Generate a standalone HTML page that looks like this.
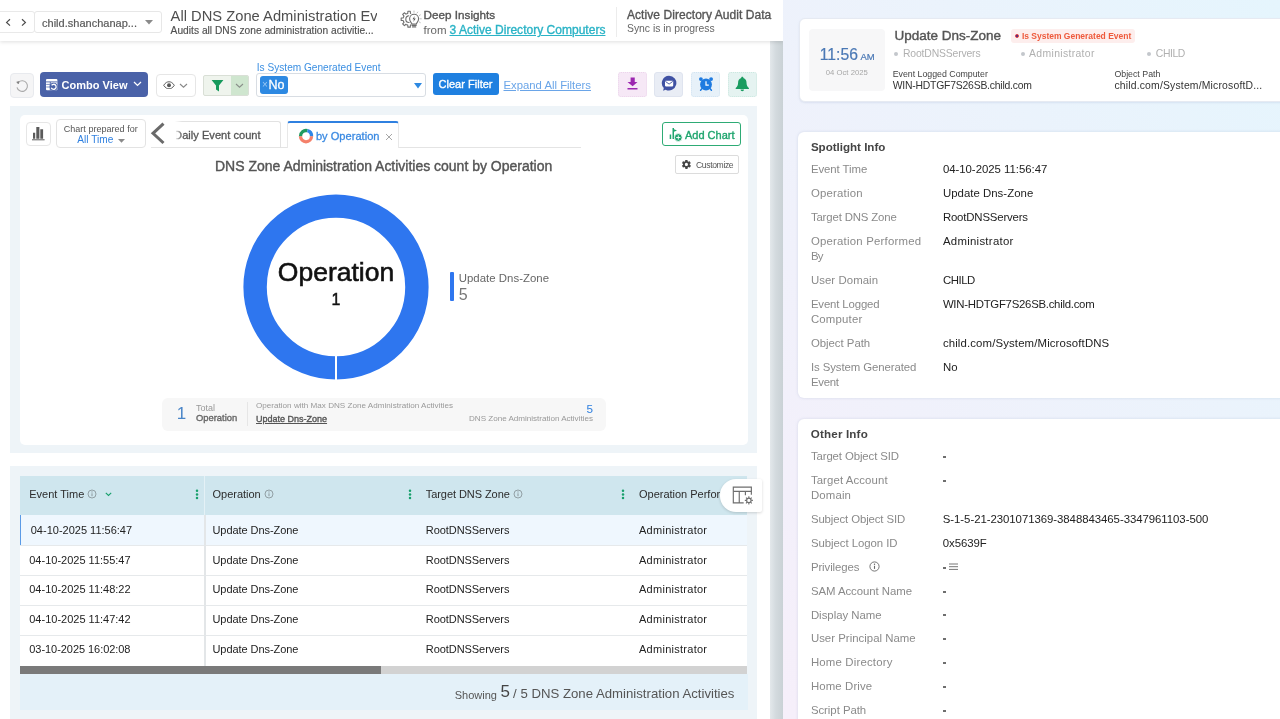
<!DOCTYPE html>
<html>
<head>
<meta charset="utf-8">
<title>All DNS Zone Administration Events</title>
<style>
*{box-sizing:border-box;margin:0;padding:0}
html,body{width:1280px;height:719px;overflow:hidden;background:#fff}
body{position:relative;font-family:"Liberation Sans",sans-serif;color:#333;font-size:12px}
.abs{position:absolute}
.t{position:absolute;white-space:nowrap;line-height:16px;height:16px}
.sb{font-weight:bold}
/* left side */
#left{position:absolute;left:0;top:0;width:783px;height:719px;background:#fff;overflow:hidden}
#strip{position:absolute;left:770px;top:0;width:13px;height:719px;background:linear-gradient(90deg,#e3e8eb 0%,#d3dade 45%,#c9d1d5 100%)}
#header{position:absolute;left:0;top:0;width:783px;height:41px;background:#fff;box-shadow:0 1px 4px rgba(0,0,0,.13)}
.box{position:absolute;background:#fff;border:1px solid #e3e3e3;border-radius:3px}
.cont{position:absolute;left:10px;width:747px;background:#eef4f8}
.card{position:absolute;background:#fff;border-radius:5px}
/* right side */
#right{position:absolute;left:783px;top:0;width:497px;height:719px;background:linear-gradient(to top right,#f6effa,#e5f5fd);overflow:hidden}
.rcard{position:absolute;left:15px;width:500px;background:#fff;border-radius:6px;box-shadow:0 0 3px rgba(120,140,180,.25)}
.lbl{color:#8a8a8a}
.val{color:#222}
#left,#right{will-change:transform}
</style>
</head>
<body>
<div id="left">
  <div id="strip"></div>

  <!-- toolbar -->
  <div id="toolbar">
    <div class="box" style="left:9.600px;top:73.300px;width:24.300px;height:24.400px;background:#f5f5f6;border-color:#e8eaee;border-radius:4px"></div>
    <svg class="abs" style="left:15px;top:78.500px" width="14" height="14" viewBox="0 0 14 14" fill="none"><path d="M3.400 3.300 A5.300 5.300 0 1 1 2 8.300" stroke="#aaa" stroke-width="1.100"/><path d="M1.700 2.900 L4.100 2.600 L3.300 5z" fill="#777" stroke="#777" stroke-width=".500" stroke-linejoin="round"/></svg>
    <div class="abs" style="left:40.100px;top:71.600px;width:108px;height:25.200px;background:#4a62a8;border-radius:4px"></div>
    <svg class="abs" style="left:46px;top:78.900px" width="12" height="12" viewBox="0 0 12 12"><rect x="0" y="0" width="11.400" height="11.300" rx="1" fill="#fff"/><path d="M0 2.900h11.400M4.300 2.900v8.400" stroke="#4a62a8" stroke-width=".900" fill="none"/><path d="M.200 5.400h3.800M.200 8h3.800" stroke="#7d90c4" stroke-width="1" fill="none"/><circle cx="7.600" cy="7.700" r="4" fill="#4a62a8"/><path d="M5.600 6.300A2.500 2.500 0 1 1 5.300 8.700" stroke="#fff" stroke-width="1.300" fill="none"/></svg>
    <span class="t" style="letter-spacing:0.02px;;;left:61.5px;top:77px;font-size:11px;color:#fff;font-weight:bold">Combo View</span>
    <svg class="abs" style="left:133px;top:81px" width="9" height="6" viewBox="0 0 9 6"><path d="M1 1l3.5 3.4L8 1" fill="none" stroke="#fff" stroke-width="1.3"/></svg>
    <div class="box" style="left:155.5px;top:73.5px;width:40px;height:23px;border-color:#e6e6e6;border-radius:4px"></div>
    <svg class="abs" style="left:163px;top:80.800px" width="12" height="8.600" viewBox="0 0 14 10"><path d="M0.8 5C3 1.6 5 .9 7 .9s4 .7 6.200 4.100C11 8.400 9 9.100 7 9.100S3 8.400.8 5z" fill="none" stroke="#555" stroke-width="1.1"/><circle cx="7" cy="5" r="2.300" fill="#555"/></svg>
    <svg class="abs" style="left:179px;top:83px" width="9" height="6" viewBox="0 0 9 6"><path d="M1 1l3.5 3.2L8 1" fill="none" stroke="#888" stroke-width="1.1"/></svg>
    <div class="abs" style="left:203px;top:75.200px;width:45.600px;height:21px;border:1px solid #d9dfd6;border-radius:2px;background:#eff4ed;overflow:hidden"><div class="abs" style="left:27px;top:0;width:18px;height:20px;background:#cfe6cf"></div></div>
    <svg class="abs" style="left:211px;top:79px" width="13" height="14" viewBox="0 0 13 14"><path d="M0.6 1h11.800L8 6.400v6.200L5 10.400v-4z" fill="#169a5c"/></svg>
    <svg class="abs" style="left:235px;top:83px" width="9" height="6" viewBox="0 0 9 6"><path d="M1 1l3.5 3.200L8 1" fill="none" stroke="#8a8f8a" stroke-width="1.1"/></svg>
    <span class="t" style="letter-spacing:0.01px;;;left:256.800px;top:60px;font-size:10.1px;color:#3b8fe2">Is System Generated Event</span>
    <div class="box" style="left:256.200px;top:73.200px;width:170.300px;height:23.500px;border-color:#d8dde3;border-radius:3px"></div>
    <div class="abs" style="left:259.500px;top:76px;width:28px;height:17.500px;background:#2d89e2;border-radius:3px"></div>
    <span class="t" style="left:262px;top:77px;font-size:10px;color:#9cc9f4">&#215;</span>
    <span class="t" style="letter-spacing:0.01px;;;left:268.500px;top:77px;font-size:12.5px;color:#fff;-webkit-text-stroke:.3px #fff">No</span>
    <svg class="abs" style="left:414px;top:83px" width="8" height="6" viewBox="0 0 8 6"><path d="M0 0h8L4 5.600z" fill="#2d89e2"/></svg>
    <div class="abs" style="left:432.500px;top:73.200px;width:66.200px;height:22px;background:#1f80e0;border-radius:3px"></div>
    <span class="t" style="letter-spacing:0.02px;;;left:438.500px;top:76.300px;font-size:11px;color:#fff;-webkit-text-stroke:.35px #fff">Clear Filter</span>
    <span class="t" style="letter-spacing:0.01px;;;left:503.500px;top:77px;font-size:11.3px;color:#6aa5e8;text-decoration:underline">Expand All Filters</span>
    <div class="abs" style="left:618px;top:72px;width:28.500px;height:24.700px;background:#f6e8f6;border:1px dotted #ecd5ec;border-radius:3px"></div>
    <svg class="abs" style="left:626px;top:76px" width="13" height="15" viewBox="0 0 13 15"><path d="M4.600 1.500h4.150v4.400h2.750L6.600 10.300 1.500 5.900h3.100z" fill="#9c27b0"/><rect x="1.500" y="12" width="10" height="1.500" fill="#9c27b0"/></svg>
    <div class="abs" style="left:654.400px;top:72px;width:29px;height:24.700px;background:#e9edf5;border:1px solid #dfe4ef;border-radius:3px"></div>
    <svg class="abs" style="left:660px;top:74px" width="18" height="18" viewBox="0 0 18 18"><path d="M9 1.700a7.400 7.400 0 1 1-3.400 14 l-2.500 1.100 .700-2.700A7.400 7.400 0 0 1 9 1.700z" fill="#3f51a3"/><rect x="5" y="6.800" width="8.200" height="5.600" rx=".800" fill="#fff"/><path d="M5.400 7.400l3.700 2.700 3.700-2.700" fill="none" stroke="#3f51a3" stroke-width=".900"/></svg>
    <div class="abs" style="left:691px;top:72px;width:29.200px;height:24.700px;background:#e7f1f9;border:1px dotted #d2e4f2;border-radius:3px"></div>
    <svg class="abs" style="left:697.600px;top:75.500px" width="16" height="16" viewBox="0 0 16 16"><circle cx="8" cy="8.500" r="5.900" fill="#1f7be0"/><circle cx="2.900" cy="3.100" r="1.900" fill="#1f7be0"/><circle cx="13.100" cy="3.100" r="1.900" fill="#1f7be0"/><path d="M3.900 12.600l-1.300 1.700M12.100 12.600l1.300 1.700" stroke="#1f7be0" stroke-width="1.500" stroke-linecap="round"/><path d="M8 5.200v4h2.800" fill="none" stroke="#fff" stroke-width="1.200"/></svg>
    <div class="abs" style="left:727.500px;top:72px;width:29px;height:24.700px;background:#e5f3f1;border:1px dotted #cbe8e0;border-radius:3px"></div>
    <svg class="abs" style="left:735px;top:76px" width="15" height="16" viewBox="0 0 15 16"><path d="M7.300.800c.700 0 1.100.500 1.100 1.100 2 .700 3.100 2.400 3.100 4.700 0 2.800.800 4.300 2.400 5.500v.800H.700v-.800c1.600-1.200 2.400-2.700 2.400-5.500 0-2.300 1.100-4 3.100-4.700 0-.600.400-1.100 1.100-1.100z" fill="#1a9c60"/><path d="M5.600 13.600h3.400c0 1-.700 1.700-1.700 1.700s-1.700-.700-1.700-1.700z" fill="#1a9c60"/></svg>
  </div>

  <!-- chart container -->
  <div class="cont" id="chartCont" style="top:106px;height:347px">
    <div class="card" style="left:10px;top:9px;width:727.500px;height:329.500px"></div>
  </div>
  <div id="chart">
    <div class="box" style="left:26px;top:122px;width:25px;height:23.500px;border-color:#e6e6e6;border-radius:4px"></div>
    <svg class="abs" style="left:31px;top:126px" width="15" height="15" viewBox="0 0 15 15"><path d="M2 6.800h2.200v5.900H2zM5.300 1h3.100v11.700H5.300zM9.300 3.300h2.800v9.400H9.300z" fill="#5a5a5a"/><path d="M1 13.800h12.600" stroke="#5a5a5a" stroke-width="1"/></svg>
    <div class="box" style="left:55.500px;top:119px;width:90.500px;height:29px;border-color:#e3e3e3;border-radius:4px"></div>
    <span class="t" style="letter-spacing:0.03px;;left:63.700px;top:120.600px;font-size:9px;color:#555">Chart prepared for</span>
    <span class="t" style="letter-spacing:0.01px;;left:77.300px;top:131.800px;font-size:10.1px;color:#2f80e0">All Time</span>
    <svg class="abs" style="left:117.500px;top:138.500px" width="7" height="4" viewBox="0 0 7 4"><path d="M0 0h7L3.500 3.800z" fill="#8a8a8a"/></svg>
    <svg class="abs" style="left:149px;top:121px" width="18" height="25" viewBox="0 0 18 25"><path d="M14.500 2.600 L4 12.300 L14.500 22" fill="none" stroke="#6a6a6a" stroke-width="3"/></svg>
    <div class="abs" style="left:151px;top:147px;width:430px;height:1px;background:#e4e4e4"></div>
    <div class="abs" style="left:168px;top:121px;width:112.500px;height:26.500px;border:1px solid #e2e2e2;border-bottom:none;border-left:none;border-radius:0 3px 0 0"></div>
    <div class="abs" style="left:176px;top:126px;width:90px;height:18px;overflow:hidden"><span class="t" style="letter-spacing:0.01px;;left:-1.900px;top:0.900px;font-size:11.1px;color:#555;-webkit-text-stroke:.3px #555">Daily Event count</span></div>
    <div class="abs" style="left:166px;top:119px;width:16px;height:28px;background:linear-gradient(90deg,#fff 55%,rgba(255,255,255,0))"></div>
    <div class="abs" style="left:287.400px;top:121px;width:112.100px;height:27px;background:#fff;border:1px solid #e8e8e8;border-top:2px solid #2f80e0;border-bottom:none;border-radius:3px 3px 0 0"></div>
    <svg class="abs" style="left:297.600px;top:128px" width="16" height="16" viewBox="0 0 16 16" fill="none" stroke-width="3.300"><path d="M2.500 8.300 A5.500 5.500 0 0 1 9.400 2.700" stroke="#1f9a60"/><path d="M9.400 2.700 A5.500 5.500 0 0 1 13.500 8.300" stroke="#2f86e6"/><path d="M13.500 8.300 A5.500 5.500 0 0 1 2.500 8.300" stroke="#f4806a"/></svg>
    <span class="t" style="letter-spacing:0.01px;;left:315.900px;top:127.900px;font-size:11.1px;color:#3b8ae2;-webkit-text-stroke:.3px #3b8ae2">by Operation</span>
    <svg class="abs" style="left:384.600px;top:133px" width="8" height="8" viewBox="0 0 8 8"><path d="M1 1l6 6M7 1l-6 6" stroke="#a8a8a8" stroke-width="1"/></svg>
    <div class="abs" style="left:662px;top:122px;width:79px;height:23.700px;border:1.500px solid #2eab75;border-radius:3px;background:#fff"></div>
    <svg class="abs" style="left:668px;top:126px" width="16" height="16" viewBox="0 0 16 16"><path d="M1.700 8.600h1.500v4.400H1.700zM4.500 2h1.500v11H4.500z" fill="#1fa56e"/><path d="M6 3.300l3 1.200-3 1.300z" fill="#1fa56e"/><circle cx="10.300" cy="11.500" r="3.900" fill="#1fa56e" stroke="#fff" stroke-width=".800"/><path d="M10.300 9.400v4.200M8.200 11.500h4.200" stroke="#fff" stroke-width=".900"/></svg>
    <span class="t" style="letter-spacing:-0.01px;;left:685px;top:127.200px;font-size:11px;color:#1fa56e;-webkit-text-stroke:.35px #1fa56e">Add Chart</span>
    <div class="box" style="left:674.700px;top:155px;width:64px;height:18.500px;border-color:#dcdcdc;border-radius:2px"></div>
    <svg class="abs" style="left:681.200px;top:159px" width="10.800" height="10.800" viewBox="0 0 24 24"><path fill="#444" d="M19.400 13c0-.3.100-.600.100-1s0-.700-.100-1l2.100-1.600c.200-.150.250-.400.100-.650l-2-3.450c-.100-.200-.400-.300-.600-.200l-2.500 1c-.500-.400-1.100-.700-1.700-1l-.400-2.650A.500.500 0 0 0 14 2h-4c-.250 0-.450.200-.500.400l-.400 2.650c-.600.250-1.150.600-1.700 1l-2.450-1c-.250-.100-.500 0-.600.200l-2 3.450c-.100.200-.100.500.100.650L4.600 11c0 .300-.100.650-.100 1s0 .700.100 1l-2.100 1.650c-.200.150-.250.400-.100.650l2 3.450c.100.200.400.300.600.200l2.500-1c.500.400 1.100.700 1.700 1l.400 2.650c0 .200.200.400.500.400h4c.250 0 .450-.200.500-.400l.400-2.650c.600-.250 1.150-.600 1.700-1l2.500 1c.200.100.500 0 .600-.200l2-3.450c.100-.200.100-.500-.100-.650zM12 15.500a3.500 3.500 0 1 1 0-7 3.500 3.500 0 0 1 0 7z"/></svg>
    <span class="t" style="letter-spacing:-0.37px;left:696px;top:156.600px;font-size:8.6px;color:#555">Customize</span>
    <span class="t" style="letter-spacing:-0.01px;;left:215px;top:157.700px;font-size:14px;color:#555;-webkit-text-stroke:.4px #555">DNS Zone Administration Activities count by Operation</span>
    <svg class="abs" style="left:236px;top:187px" width="200" height="200" viewBox="0 0 200 200"><circle cx="100" cy="100" r="80.900" fill="none" stroke="#2e76ef" stroke-width="23.400"/><rect x="99" y="166" width="2" height="30" fill="#fff"/></svg>
    <span class="t" style="letter-spacing:0.01px;;left:277.800px;top:257px;height:30px;line-height:30px;font-size:26.5px;color:#111;-webkit-text-stroke:.6px #111">Operation</span>
    <span class="t" style="letter-spacing:0.09px;;left:331.500px;top:290.200px;height:20px;line-height:20px;font-size:16px;color:#111;-webkit-text-stroke:.45px #111">1</span>
    <div class="abs" style="left:450.400px;top:272.300px;width:3.600px;height:29px;background:#2e76ef;border-radius:1px"></div>
    <span class="t" style="letter-spacing:0.03px;;left:458.700px;top:270.400px;font-size:11.4px;color:#666">Update Dns-Zone</span>
    <span class="t" style="letter-spacing:0.09px;;left:458.700px;top:285px;height:20px;line-height:20px;font-size:16px;color:#777">5</span>
    <div class="abs" style="left:162.300px;top:397.600px;width:443.300px;height:33.200px;background:#f7f7f7;border-radius:6px"></div>
    <span class="t" style="letter-spacing:0.03px;;left:176.800px;top:404px;height:20px;line-height:20px;font-size:17px;color:#4a86c8">1</span>
    <span class="t" style="left:195.900px;top:400px;font-size:9px;color:#999">Total</span>
    <span class="t" style="letter-spacing:0.03px;;left:195.900px;top:410.300px;font-size:9.4px;color:#666;-webkit-text-stroke:.35px #666">Operation</span>
    <div class="abs" style="left:247px;top:402px;width:1px;height:24px;background:#e6e6e6"></div>
    <span class="t" style="letter-spacing:0.01px;;left:256px;top:398.200px;font-size:8.1px;color:#999">Operation with Max DNS Zone Administration Activities</span>
    <span class="t" style="left:256px;top:411px;font-size:9px;color:#555;-webkit-text-stroke:.35px #555;text-decoration:underline">Update Dns-Zone</span>
    <span class="t" style="letter-spacing:-0.02px;;left:586.500px;top:400.500px;font-size:11.7px;color:#2f80e0">5</span>
    <span class="t" style="letter-spacing:-0.02px;;left:469px;top:411px;font-size:8.1px;color:#999">DNS Zone Administration Activities</span>
  </div>

  <!-- table container -->
  <div class="cont" id="tableCont" style="top:466px;height:253px"></div>
  <div id="grid">
  <div class="abs" style="left:20px;top:476.200px;width:727px;height:38.800px;background:#cfe6ee"></div>
  <div class="abs" style="left:20px;top:515px;width:727px;height:150.600px;background:#fff"></div>
  <div class="abs" style="left:20px;top:515px;width:727px;height:30.200px;background:#eff7fe;border-left:1.600px solid #5a9ae6"></div>
  <span class="t" style="left:30.75px;top:521.6px;font-size:11px;color:#222">04-10-2025 11:56:47</span>
  <span class="t" style="letter-spacing:-0.07px;;left:212.500px;top:521.6px;font-size:11px;color:#222">Update Dns-Zone</span>
  <span class="t" style="letter-spacing:-0.06px;;left:425.800px;top:521.6px;font-size:11px;color:#222">RootDNSServers</span>
  <span class="t" style="letter-spacing:0.27px;;left:639px;top:521.6px;font-size:11px;color:#222">Administrator</span>
  <div class="abs" style="left:20px;top:544.8px;width:727px;height:1px;background:#e6e9eb"></div>
  <span class="t" style="left:29.25px;top:551.6px;font-size:11px;color:#222">04-10-2025 11:55:47</span>
  <span class="t" style="letter-spacing:-0.07px;;left:212.500px;top:551.6px;font-size:11px;color:#222">Update Dns-Zone</span>
  <span class="t" style="letter-spacing:-0.06px;;left:425.800px;top:551.6px;font-size:11px;color:#222">RootDNSServers</span>
  <span class="t" style="letter-spacing:0.27px;;left:639px;top:551.6px;font-size:11px;color:#222">Administrator</span>
  <div class="abs" style="left:20px;top:574.9px;width:727px;height:1px;background:#e6e9eb"></div>
  <span class="t" style="left:29.25px;top:581.3px;font-size:11px;color:#222">04-10-2025 11:48:22</span>
  <span class="t" style="letter-spacing:-0.07px;;left:212.500px;top:581.3px;font-size:11px;color:#222">Update Dns-Zone</span>
  <span class="t" style="letter-spacing:-0.06px;;left:425.800px;top:581.3px;font-size:11px;color:#222">RootDNSServers</span>
  <span class="t" style="letter-spacing:0.27px;;left:639px;top:581.3px;font-size:11px;color:#222">Administrator</span>
  <div class="abs" style="left:20px;top:604.7px;width:727px;height:1px;background:#e6e9eb"></div>
  <span class="t" style="left:29.25px;top:611.1px;font-size:11px;color:#222">04-10-2025 11:47:42</span>
  <span class="t" style="letter-spacing:-0.07px;;left:212.500px;top:611.1px;font-size:11px;color:#222">Update Dns-Zone</span>
  <span class="t" style="letter-spacing:-0.06px;;left:425.800px;top:611.1px;font-size:11px;color:#222">RootDNSServers</span>
  <span class="t" style="letter-spacing:0.27px;;left:639px;top:611.1px;font-size:11px;color:#222">Administrator</span>
  <div class="abs" style="left:20px;top:634.9px;width:727px;height:1px;background:#e6e9eb"></div>
  <span class="t" style="letter-spacing:-0.05px;;left:29.25px;top:640.9px;font-size:11px;color:#222">03-10-2025 16:02:08</span>
  <span class="t" style="letter-spacing:-0.07px;;left:212.500px;top:640.9px;font-size:11px;color:#222">Update Dns-Zone</span>
  <span class="t" style="letter-spacing:-0.06px;;left:425.800px;top:640.9px;font-size:11px;color:#222">RootDNSServers</span>
  <span class="t" style="letter-spacing:0.27px;;left:639px;top:640.9px;font-size:11px;color:#222">Administrator</span>
  <div class="abs" style="left:204px;top:476.200px;width:1px;height:38.800px;background:#e4f1f6"></div>
  <div class="abs" style="left:204px;top:515px;width:1.500px;height:150.600px;background:#e3e6e8"></div>
  <span class="t" style="left:29.250px;top:485.900px;font-size:11px;color:#2c2c2c">Event Time</span>
  <svg class="abs" style="left:87px;top:489.3px" width="10" height="10" viewBox="0 0 10 10"><circle cx="5" cy="5" r="4" fill="none" stroke="#8b979c" stroke-width=".9"/><path d="M5 4.300v2.900" stroke="#8b979c" stroke-width="1"/><circle cx="5" cy="2.900" r=".600" fill="#8b979c"/></svg>
  <svg class="abs" style="left:105px;top:492px" width="7" height="5" viewBox="0 0 7 5"><path d="M.800.800l2.700 2.700L6.200.800" fill="none" stroke="#18a06c" stroke-width="1.100"/></svg>
  <svg class="abs" style="left:194.5px;top:489px" width="4" height="11" viewBox="0 0 4 11"><circle cx="2" cy="1.700" r="1.250" fill="#18a06c"/><circle cx="2" cy="5.400" r="1.250" fill="#18a06c"/><circle cx="2" cy="9.100" r="1.250" fill="#18a06c"/></svg>
  <span class="t" style="letter-spacing:-0.01px;;left:212.500px;top:485.900px;font-size:11px;color:#2c2c2c">Operation</span>
  <svg class="abs" style="left:263.75px;top:489.3px" width="10" height="10" viewBox="0 0 10 10"><circle cx="5" cy="5" r="4" fill="none" stroke="#8b979c" stroke-width=".9"/><path d="M5 4.300v2.900" stroke="#8b979c" stroke-width="1"/><circle cx="5" cy="2.900" r=".600" fill="#8b979c"/></svg>
  <svg class="abs" style="left:407.8px;top:489px" width="4" height="11" viewBox="0 0 4 11"><circle cx="2" cy="1.700" r="1.250" fill="#18a06c"/><circle cx="2" cy="5.400" r="1.250" fill="#18a06c"/><circle cx="2" cy="9.100" r="1.250" fill="#18a06c"/></svg>
  <span class="t" style="letter-spacing:-0.07px;;left:425.800px;top:485.900px;font-size:11px;color:#2c2c2c">Target DNS Zone</span>
  <svg class="abs" style="left:512.9px;top:489.3px" width="10" height="10" viewBox="0 0 10 10"><circle cx="5" cy="5" r="4" fill="none" stroke="#8b979c" stroke-width=".9"/><path d="M5 4.300v2.900" stroke="#8b979c" stroke-width="1"/><circle cx="5" cy="2.900" r=".600" fill="#8b979c"/></svg>
  <svg class="abs" style="left:621px;top:489px" width="4" height="11" viewBox="0 0 4 11"><circle cx="2" cy="1.700" r="1.250" fill="#18a06c"/><circle cx="2" cy="5.400" r="1.250" fill="#18a06c"/><circle cx="2" cy="9.100" r="1.250" fill="#18a06c"/></svg>
  <div class="abs" style="left:639px;top:484px;width:82px;height:20px;overflow:hidden"><span class="t" style="letter-spacing:-0.01px;;left:0;top:2.250px;font-size:11px;color:#2c2c2c">Operation Performed By</span></div>
  <div class="abs" style="left:719.900px;top:479px;width:42.600px;height:32.600px;background:#fff;border-radius:16px 2px 2px 16px;box-shadow:0 1px 3px rgba(0,0,0,.16)"></div>
  <svg class="abs" style="left:732px;top:485.500px" width="22.400" height="19.200" viewBox="0 0 23 20" fill="none" stroke="#6d6d6d" stroke-width="1.200"><path d="M12 17.600H1.200V1.200h18.800V9"/><path d="M1.200 5.600h18.800M7.400 5.600v12M13.800 5.600v4"/><circle cx="17.400" cy="15" r="2.300"/><path d="M17.400 10.800v1.600M17.400 17.600v1.600M13.200 15h1.600M20 15h1.600M14.400 12l1.150 1.150M19.250 16.850L20.400 18M20.400 12l-1.150 1.150M15.550 16.850L14.400 18" stroke-width="1.100"/></svg>
  <div class="abs" style="left:20px;top:665.600px;width:727px;height:8.200px;background:#d2d2d2"></div>
  <div class="abs" style="left:20px;top:665.600px;width:361px;height:8.200px;background:#7a7a7a"></div>
  <div class="abs" style="left:20px;top:673.800px;width:727.500px;height:36.500px;background:#e4f1f9"></div>
  <span class="t" style="left:454.700px;top:686.500px;font-size:11px;color:#555">Showing</span>
  <span class="t" style="letter-spacing:-0.07px;;left:500.600px;top:682px;height:20px;line-height:20px;font-size:17px;color:#444">5</span>
  <span class="t" style="left:513.100px;top:686.200px;font-size:13.2px;color:#555">/ 5 DNS Zone Administration Activities</span>
  </div>

  <!-- header -->
  <div id="header">
    <div class="box" style="left:-5px;top:11px;width:40px;height:22px;border-radius:3px;border-color:#e9e9e9"></div>
    <svg class="abs" style="left:4px;top:17px" width="26" height="11" viewBox="0 0 26 11"><path d="M6 2.2 L2.6 5.4 L6 8.6 M18 2.2 L21.4 5.4 L18 8.6" fill="none" stroke="#4a4a4a" stroke-width="1.200"/></svg>
    <div class="box" style="left:34px;top:11px;width:128px;height:22px;border-color:#e7e7e7"></div>
    <span class="t" style="letter-spacing:0.01px;;;left:42px;top:15px;font-size:11px;color:#5a5a5a;-webkit-text-stroke:.200px #5a5a5a">child.shanchanap...</span>
    <svg class="abs" style="left:145px;top:20px" width="8" height="5" viewBox="0 0 8 5"><path d="M0 0h8L4 4.6z" fill="#8a8a8a"/></svg>
    <div class="abs" style="left:170px;top:6px;width:206.5px;height:20px;overflow:hidden"><span class="t" style="letter-spacing:0.02px;left:0.600px;top:2.300px;font-size:14.7px;color:#4e4e4e">All DNS Zone Administration Events</span></div>
    <span class="t" style="letter-spacing:0.02px;;;left:170.6px;top:23.400px;font-size:10.2px;color:#505050;-webkit-text-stroke:.150px #505050">Audits all DNS zone administration activitie...</span>
    <svg class="abs" style="left:399px;top:9px" width="24" height="20" viewBox="0 0 24 20" fill="none" stroke="#6e6e6e" stroke-width="1.100" stroke-linecap="round" stroke-linejoin="round">
      <path d="M15.90 11.75 L15.95 11.55 L18.01 11.38 L18.01 9.02 L15.95 8.85 L15.90 8.65 L15.30 7.20 L15.19 7.02 L16.53 5.44 L14.86 3.77 L13.28 5.11 L13.10 5.00 L11.65 4.40 L11.45 4.35 L11.28 2.29 L8.92 2.29 L8.75 4.35 L8.55 4.40 L7.10 5.00 L6.92 5.11 L5.34 3.77 L3.67 5.44 L5.01 7.02 L4.90 7.20 L4.30 8.65 L4.25 8.85 L2.19 9.02 L2.19 11.38 L4.25 11.55 L4.30 11.75 L4.90 13.20 L5.01 13.38 L3.67 14.96 L5.34 16.63 L6.92 15.29 L7.10 15.40 L8.55 16.00 L8.75 16.05 L8.92 18.11 L11.28 18.11 L11.45 16.05 L11.65 16.00 L13.10 15.40 L13.28 15.29 L14.86 16.63 L16.53 14.96 L15.19 13.38 L15.30 13.20Z"/>
      <circle cx="10.1" cy="10.2" r="3.300"/>
      <rect x="12.300" y="0" width="12" height="20" fill="#fff" stroke="none"/>
      <circle cx="15.100" cy="9.800" r="6" fill="#fff" stroke="none"/>
      <path d="M12.900 15.100 C12.800 13.900 10.600 12.600 10.600 9.800 A4.500 4.500 0 0 1 19.600 9.800 C19.600 12.600 17.400 13.900 17.300 15.100 Z"/>
      <path d="M13 16.500h4.200 M13.500 17.900h3.200" stroke-width="1.200"/>
      <path d="M15.700 6.900 L13.500 10.300 H15 L14.300 12.900 L16.700 9.400 H15.100 Z" fill="#555" stroke="none"/>
      <path d="M15 3.300v-1.300 M18 4.100l.700-1 M20.300 6.500l1-.600 M21 9.800h1.300 M20.300 13l1 .600" stroke="#b5b5b5" stroke-width=".900"/>
    </svg>
    <span class="t" style="letter-spacing:0.01px;;;left:423.6px;top:7px;font-size:11.7px;color:#555;-webkit-text-stroke:.35px #555">Deep Insights</span>
    <span class="t" style="left:423.6px;top:22px;font-size:11.5px;color:#666">from</span>
    <span class="t" style="letter-spacing:0.02px;;;left:449.5px;top:22px;font-size:12px;color:#2ab3c6;-webkit-text-stroke:.35px #2ab3c6;text-decoration:underline">3 Active Directory Computers</span>
    <div class="abs" style="left:616px;top:7px;width:1px;height:30px;background:#ececec"></div>
    <span class="t" style="letter-spacing:0.06px;;;left:627px;top:7px;font-size:12px;color:#555;-webkit-text-stroke:.35px #555">Active Directory Audit Data</span>
    <span class="t" style="letter-spacing:-0.01px;;;left:627px;top:21px;font-size:10.4px;color:#666">Sync is in progress</span>
  </div>
</div>

<div id="right">
  <div class="abs" style="left:16.200px;top:18px;width:520px;height:84px;background:#fff;border:1px solid #e6eaf2;box-shadow:0 1px 2px rgba(130,150,190,.18);border-radius:6px"></div>
  <div class="abs" style="left:25.7px;top:29px;width:76.500px;height:61.800px;background:#f7f7f8;border-radius:4px"></div>
  <span class="t" style="left:36.800px;top:44.600px;font-size:15.7px;color:#4a78b5;-webkit-text-stroke:.2px #4a78b5;height:20px;line-height:20px">11:56</span>
  <span class="t" style="letter-spacing:0.03px;;left:77.400px;top:48.900px;font-size:9.5px;color:#4a78b5;-webkit-text-stroke:.2px #4a78b5">AM</span>
  <span class="t" style="letter-spacing:0.03px;;left:42.700px;top:64.800px;font-size:7.7px;color:#a8a8a8">04 Oct 2025</span>
  <span class="t" style="letter-spacing:-0.01px;;left:111.6px;top:27.1px;font-size:13.5px;color:#555;-webkit-text-stroke:.4px #555;height:18px;line-height:18px">Update Dns-Zone</span>
  <div class="abs" style="left:227.5px;top:29.200px;width:124.500px;height:14.300px;background:#fdeeed;border-radius:3px"></div>
  <div class="abs" style="left:231.9px;top:34.3px;width:3.800px;height:3.800px;border-radius:50%;background:#3a2a8a;border:1.100px solid #ee3d3d"></div>
  <span class="t" style="letter-spacing:-0.01px;;left:238.9px;top:28.4px;font-size:8.5px;color:#ee5a3c;font-weight:bold">Is System Generated Event</span>
  <div class="abs" style="left:110.8px;top:51.600px;width:4px;height:4px;border-radius:50%;background:#c3c7cc"></div>
  <span class="t" style="letter-spacing:-0.16px;;left:120px;top:45.6px;font-size:10.4px;color:#b0b0b0">RootDNSServers</span>
  <div class="abs" style="left:237.5px;top:51.600px;width:4px;height:4px;border-radius:50%;background:#c3c7cc"></div>
  <span class="t" style="letter-spacing:0.34px;;left:246.1px;top:45.6px;font-size:10.4px;color:#b0b0b0">Administrator</span>
  <div class="abs" style="left:364px;top:51.600px;width:4px;height:4px;border-radius:50%;background:#c3c7cc"></div>
  <span class="t" style="letter-spacing:-0.42px;;left:372.8px;top:45.6px;font-size:10.4px;color:#b0b0b0">CHILD</span>
  <span class="t" style="letter-spacing:-0.01px;;left:109.7px;top:66px;font-size:8.8px;color:#444">Event Logged Computer</span>
  <span class="t" style="letter-spacing:-0.21px;;left:109.700px;top:78.400px;font-size:10.4px;color:#333">WIN-HDTGF7S26SB.child.com</span>
  <span class="t" style="left:331.4px;top:65.8px;font-size:8.8px;color:#444">Object Path</span>
  <span class="t" style="letter-spacing:0.18px;;left:331.400px;top:78.400px;font-size:10.4px;color:#333">child.com/System/MicrosoftD...</span>
  <div class="rcard" style="left:14.8px;top:132.200px;height:265.400px"></div>
  <span class="t" style="letter-spacing:-0.02px;;left:27.9px;top:138.8px;font-size:11.6px;color:#444;font-weight:bold">Spotlight Info</span>
  <span class="t" style="letter-spacing:-0.07px;;left:27.9px;top:161.1px;font-size:11.4px;color:#8a8a8a">Event Time</span>
  <span class="t" style="letter-spacing:-0.03px;;left:159.9px;top:161.1px;font-size:11.4px;color:#222">04-10-2025 11:56:47</span>
  <span class="t" style="letter-spacing:0.2px;;left:27.9px;top:185.3px;font-size:11.4px;color:#8a8a8a">Operation</span>
  <span class="t" style="letter-spacing:0.03px;;left:159.9px;top:185.3px;font-size:11.4px;color:#222">Update Dns-Zone</span>
  <span class="t" style="letter-spacing:-0.15px;;left:27.9px;top:209.2px;font-size:11.4px;color:#8a8a8a">Target DNS Zone</span>
  <span class="t" style="letter-spacing:-0.17px;;left:159.9px;top:209.2px;font-size:11.4px;color:#222">RootDNSServers</span>
  <span class="t" style="letter-spacing:0.21px;;left:27.9px;top:233px;font-size:11.4px;color:#8a8a8a">Operation Performed</span>
  <span class="t" style="letter-spacing:0.28px;;left:159.9px;top:233px;font-size:11.4px;color:#222">Administrator</span>
  <span class="t" style="letter-spacing:-0.65px;;left:27.9px;top:248.2px;font-size:11.4px;color:#8a8a8a">By</span>
  <span class="t" style="letter-spacing:0.07px;;left:27.9px;top:272.2px;font-size:11.4px;color:#8a8a8a">User Domain</span>
  <span class="t" style="letter-spacing:-0.46px;;left:159.9px;top:272.2px;font-size:11.4px;color:#222">CHILD</span>
  <span class="t" style="letter-spacing:-0.14px;;left:27.9px;top:296px;font-size:11.4px;color:#8a8a8a">Event Logged</span>
  <span class="t" style="letter-spacing:-0.27px;;left:159.9px;top:296px;font-size:11.4px;color:#222">WIN-HDTGF7S26SB.child.com</span>
  <span class="t" style="letter-spacing:0.2px;;left:27.9px;top:311.3px;font-size:11.4px;color:#8a8a8a">Computer</span>
  <span class="t" style="letter-spacing:-0.02px;;left:27.9px;top:335.1px;font-size:11.4px;color:#8a8a8a">Object Path</span>
  <span class="t" style="letter-spacing:0.13px;;left:159.9px;top:335.1px;font-size:11.4px;color:#222">child.com/System/MicrosoftDNS</span>
  <span class="t" style="letter-spacing:-0.08px;;left:27.9px;top:358.8px;font-size:11.4px;color:#8a8a8a">Is System Generated</span>
  <span class="t" style="letter-spacing:0.17px;;left:159.9px;top:358.8px;font-size:11.4px;color:#222">No</span>
  <span class="t" style="letter-spacing:-0.25px;;left:27.9px;top:374.3px;font-size:11.4px;color:#8a8a8a">Event</span>
  <div class="rcard" style="left:14.8px;top:419px;height:320px"></div>
  <span class="t" style="letter-spacing:0.17px;;left:27.8px;top:425.9px;font-size:11.6px;color:#444;font-weight:bold">Other Info</span>
  <span class="t" style="letter-spacing:-0.11px;;left:27.9px;top:448.2px;font-size:11.4px;color:#8a8a8a">Target Object SID</span>
  <div class="abs" style="left:160.200px;top:456px;width:3px;height:1.500px;background:#6e6e6e"></div>
  <span class="t" style="letter-spacing:0.1px;;left:27.9px;top:472px;font-size:11.4px;color:#8a8a8a">Target Account</span>
  <div class="abs" style="left:160.200px;top:480px;width:3px;height:1.500px;background:#6e6e6e"></div>
  <span class="t" style="letter-spacing:0.16px;;left:27.9px;top:487.4px;font-size:11.4px;color:#8a8a8a">Domain</span>
  <span class="t" style="letter-spacing:-0.11px;;left:27.9px;top:511.2px;font-size:11.4px;color:#8a8a8a">Subject Object SID</span>
  <span class="t" style="letter-spacing:-0.05px;;left:159.8px;top:511.2px;font-size:11.4px;color:#222">S-1-5-21-2301071369-3848843465-3347961103-500</span>
  <span class="t" style="letter-spacing:-0.05px;;left:27.9px;top:535.1px;font-size:11.4px;color:#8a8a8a">Subject Logon ID</span>
  <span class="t" style="letter-spacing:-0.09px;;left:159.8px;top:535.1px;font-size:11.4px;color:#222">0x5639F</span>
  <span class="t" style="letter-spacing:-0.09px;;left:27.9px;top:558.7px;font-size:11.4px;color:#8a8a8a">Privileges</span>
  <div class="abs" style="left:160.200px;top:567px;width:3px;height:1.500px;background:#6e6e6e"></div>
  <span class="t" style="letter-spacing:-0.05px;;left:27.9px;top:582.8px;font-size:11.4px;color:#8a8a8a">SAM Account Name</span>
  <div class="abs" style="left:160.200px;top:591px;width:3px;height:1.500px;background:#6e6e6e"></div>
  <span class="t" style="letter-spacing:-0.01px;;left:27.9px;top:606.5px;font-size:11.4px;color:#8a8a8a">Display Name</span>
  <div class="abs" style="left:160.200px;top:614px;width:3px;height:1.500px;background:#6e6e6e"></div>
  <span class="t" style="letter-spacing:0.02px;;left:27.9px;top:630.4px;font-size:11.4px;color:#8a8a8a">User Principal Name</span>
  <div class="abs" style="left:160.200px;top:638px;width:3px;height:1.500px;background:#6e6e6e"></div>
  <span class="t" style="letter-spacing:0.18px;;left:27.9px;top:654.2px;font-size:11.4px;color:#8a8a8a">Home Directory</span>
  <div class="abs" style="left:160.200px;top:662px;width:3px;height:1.500px;background:#6e6e6e"></div>
  <span class="t" style="letter-spacing:0.13px;;left:27.9px;top:678.1px;font-size:11.4px;color:#8a8a8a">Home Drive</span>
  <div class="abs" style="left:160.200px;top:686px;width:3px;height:1.500px;background:#6e6e6e"></div>
  <span class="t" style="letter-spacing:-0.04px;;left:27.9px;top:701.9px;font-size:11.4px;color:#8a8a8a">Script Path</span>
  <div class="abs" style="left:160.200px;top:710px;width:3px;height:1.500px;background:#6e6e6e"></div>
  <svg class="abs" style="left:86.25px;top:561.1px" width="11" height="11" viewBox="0 0 11 11"><circle cx="5.500" cy="5.500" r="4.600" fill="none" stroke="#666" stroke-width=".900"/><path d="M5.500 4.800v3.100" stroke="#666" stroke-width="1.100"/><circle cx="5.500" cy="3.200" r=".700" fill="#666"/></svg>
  <svg class="abs" style="left:166.3px;top:563px" width="9" height="8" viewBox="0 0 9 8"><path d="M0 1h9M0 3.700h9M0 6.400h9" stroke="#777" stroke-width="1"/></svg>
</div>
</body>
</html>
